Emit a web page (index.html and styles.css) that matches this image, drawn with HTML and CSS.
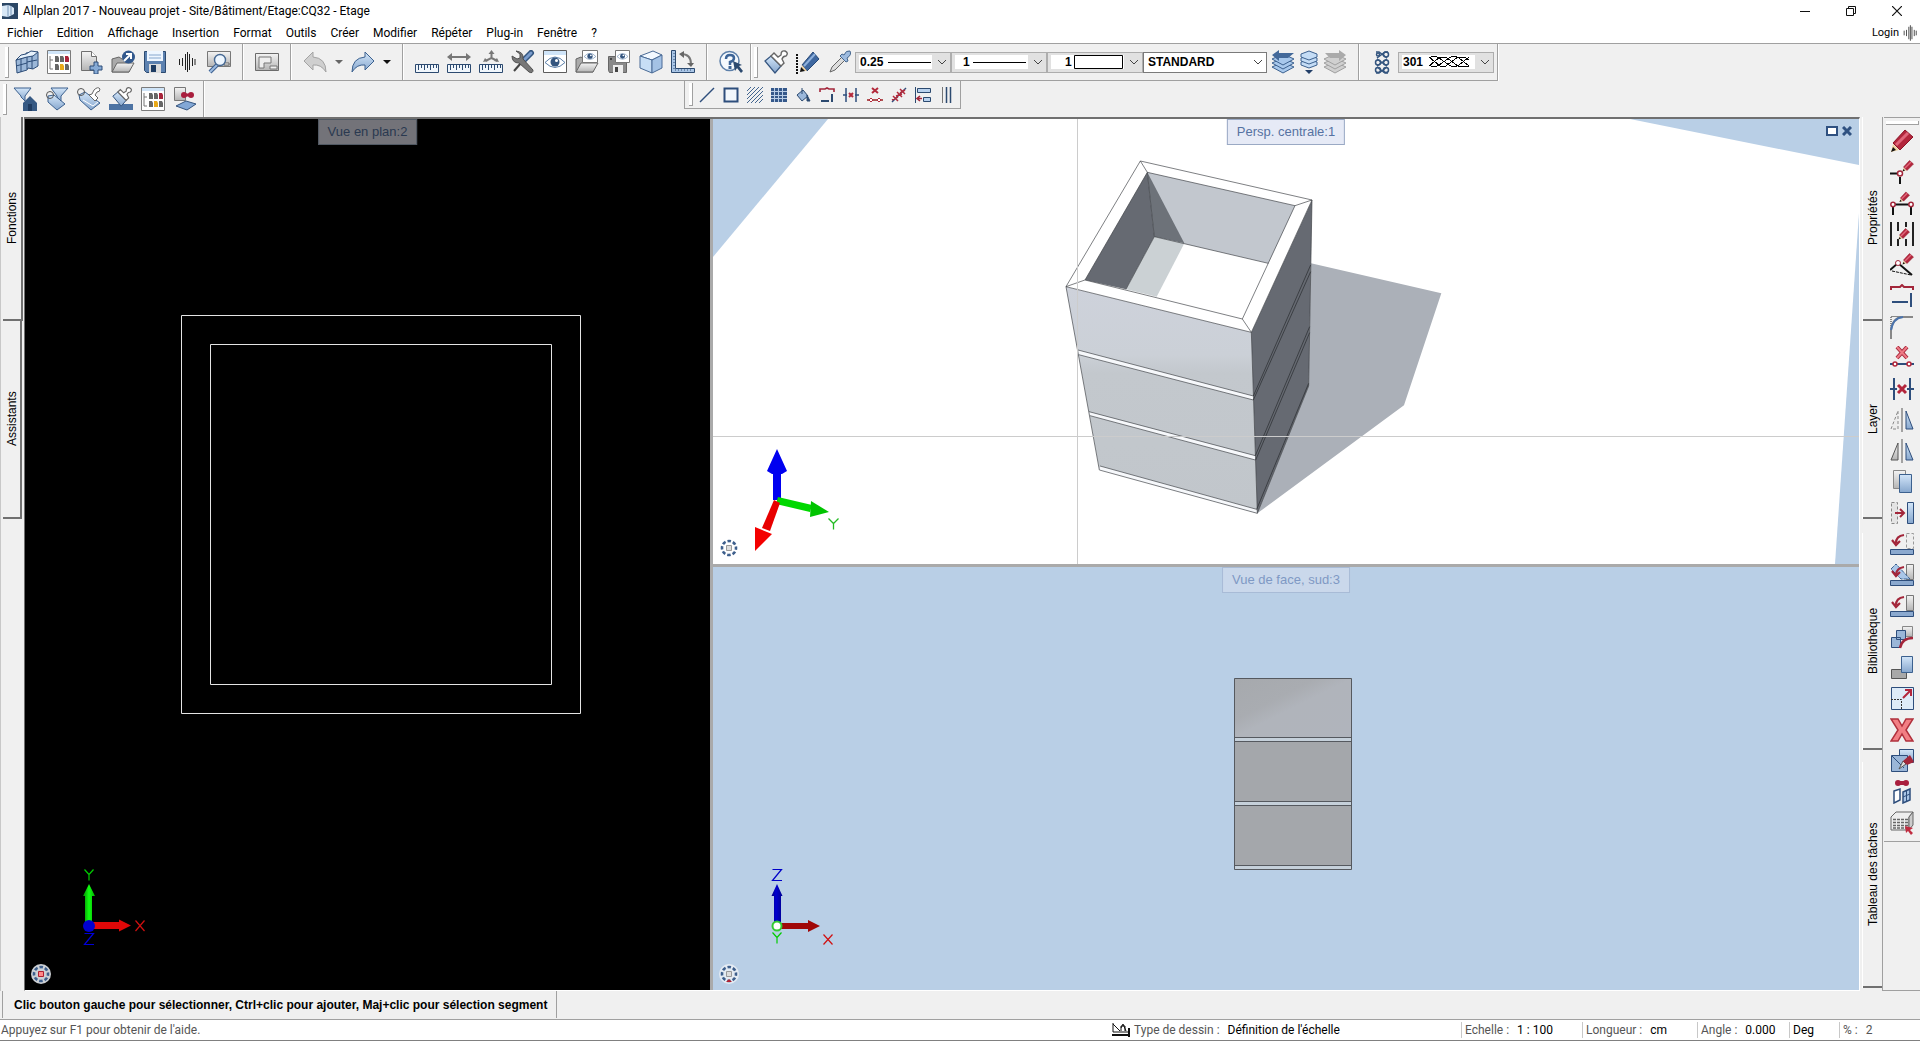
FILE: index.html
```html
<!DOCTYPE html>
<html lang="fr">
<head>
<meta charset="utf-8">
<title>Allplan 2017 - Nouveau projet</title>
<link rel="stylesheet" href="styles.css">
</head>
<body>
<svg class="defs" width="0" height="0" aria-hidden="true">
  <defs>
    <linearGradient id="blue" x1="0" y1="0" x2="0" y2="1"><stop offset="0" stop-color="#d3e6f9"/><stop offset="1" stop-color="#86a6cd"/></linearGradient>
    <linearGradient id="grey" x1="0" y1="0" x2="0" y2="1"><stop offset="0" stop-color="#f4f4f4"/><stop offset="1" stop-color="#b4b4b4"/></linearGradient>
    <linearGradient id="face" x1="0" y1="0" x2="0" y2="1"><stop offset="0" stop-color="#ced2db"/><stop offset=".3" stop-color="#cbd0d7"/><stop offset=".38" stop-color="#c3c8cd"/><stop offset="1" stop-color="#c1c6cb"/></linearGradient>
    <linearGradient id="south" x1="0" y1="0" x2="1" y2="1"><stop offset="0" stop-color="#a6a9ad"/><stop offset=".35" stop-color="#a9acb1"/><stop offset=".5" stop-color="#b0b4bb"/><stop offset="1" stop-color="#b0b4bc"/></linearGradient>
    <linearGradient id="upGreen"><stop offset="0" stop-color="#008a00"/><stop offset=".5" stop-color="#1f1"/><stop offset="1" stop-color="#00b000"/></linearGradient>
    <linearGradient id="upBlue"><stop offset="0" stop-color="#000080"/><stop offset=".4" stop-color="#0000d0"/><stop offset="1" stop-color="#000090"/></linearGradient>
  </defs>
  <symbol id="pencil" viewBox="0 0 24 24"><path d="M1 23 3 15 9 21Z" fill="#f1d3a0"/><path d="M3 14 15 1 23 8 10 21Z" fill="#b3263c" stroke="#8c1427"/><path d="m6 16 12-12" stroke="#e0667a" stroke-width="3"/><path d="m1 23 2-5 3 3Z" fill="#111"/></symbol>
  <symbol id="dial" viewBox="0 0 20 20"><circle cx="10" cy="10" r="10"/><circle cx="10" cy="10" r="7" fill="none" stroke="#3e5f8c" stroke-width="2.600" stroke-dasharray="3.500 2" stroke-dashoffset="1.750"/></symbol>
  <symbol id="table" viewBox="0 0 24 24"><path d="M.5.500h23v23H.5z" fill="#fff" stroke="#7b7b7b"/><path d="M1 1h22v3H1z" fill="#cfe4f8"/><path d="M3 6v13h3M3 10h3" fill="none" stroke="#777"/><path d="M8 6h3l1 2v4H8zM13 6h3l1 2v4h-4zM8 14h3l1 2v4H8z" fill="#666"/><path d="M18 6h3l1 2v4h-4z" fill="#a8243b"/><path d="M13 14h3l1 2v4h-4z" fill="#e8a818"/><path d="M18 14h3l1 2v4h-4z" fill="#666"/></symbol>
  <symbol id="bars" viewBox="0 0 18 20"><path d="M1.500 7v6M4.500 6v8M7.500 2v16M9.500 0v20M11.500 2v16M14.500 6v8M17 7v6" stroke="#222"/></symbol>
  <symbol id="eye" viewBox="0 0 20 12"><path d="M0 6Q10-5 20 6 10 16 0 6Z" fill="#fff" stroke="#5c7fa9"/><circle cx="10" cy="5.500" r="4.500" fill="#34557f"/><circle cx="11.500" cy="4" r="1.500" fill="#fff"/></symbol>
  <symbol id="ruler" viewBox="0 0 24 9"><path d="M.5.500h23v8H.5z" fill="#f0f6fc" stroke="#2c4a70"/><path d="M3.500 1v5M6.500 1v3M9.500 1v5M12.500 1v3M15.500 1v5M18.500 1v3M21.500 1v3" stroke="#2c4a70"/></symbol>
  <symbol id="brush" viewBox="0 0 24 24"><path d="m1 11 6-5 10 10-6 7Z" fill="url(#blue)" stroke="#35557f" stroke-width="1.200"/><path d="m7 6 3-3 4 4 3-2q0-5 4-4 4 2 1 5-3 0-4 3l2 4-3 3Z" fill="#fff" stroke="#666" stroke-width="1.400"/></symbol>
  <symbol id="layers" viewBox="0 0 24 24"><path d="m1 17 11-5 11 5-11 6Z"/><path d="m1 13 11-5 11 5-11 6Z"/><path d="m1 9 11-5 11 5-11 6Z"/></symbol>
</svg>

<header class="head">
  <div class="title">
    <svg width="16" height="16" viewBox="0 0 16 16"><path d="M0 0h16v16H0z" fill="#2c4766"/><path d="M0 3 6 2 9 3 12 5v6l-6 3-6-1Z" fill="#d9e8f6"/><path d="M6 2v12M9 3v9" stroke="#7898bb"/></svg>
    <h1>Allplan 2017 - Nouveau projet - Site/Bâtiment/Etage:CQ32 - Etage</h1>
    <div class="window">
      <button aria-label="Réduire"><svg width="10" height="10"><path d="M0 5.500h10" stroke="#111"/></svg></button>
      <button aria-label="Restaurer"><svg width="10" height="10" fill="none" stroke="#111"><path d="M.5 2.500h7v7h-7zM2.500 2V.5h7v7H8"/></svg></button>
      <button aria-label="Fermer"><svg width="10" height="10"><path d="m0 0 10 10M10 0 0 10" stroke="#111" stroke-width="1.200"/></svg></button>
    </div>
  </div>
  <nav class="menu">
    <a href="#">Fichier</a><a href="#">Edition</a><a href="#">Affichage</a><a href="#">Insertion</a><a href="#">Format</a><a href="#">Outils</a><a href="#">Créer</a><a href="#">Modifier</a><a href="#">Répéter</a><a href="#">Plug-in</a><a href="#">Fenêtre</a><a href="#">?</a>
    <div class="login"><a href="#">Login</a><svg width="14" height="16"><use href="#bars"/></svg></div>
  </nav>
</header>

<div class="toolbars">
  <div class="row first">
    <div class="group grip start">
      <button aria-label="Projet"><svg viewBox="0 0 24 24"><path d="M1 10 11 7V3l12-1v14l-5 3-5-1-1 2-10 3Z" fill="#9bb7d8" stroke="#2d4d78"/><path d="m1 10 5-5 5-1 5-3 7 1-5 4-6 1Z" fill="#e7f2fc" stroke="#2d4d78"/><path d="M6 9v13M1 16l11-3M12 7v12M17 6v13M12 12l10-2" stroke="#2d4d78" fill="none"/></svg></button>
      <button aria-label="Calques"><svg viewBox="0 0 24 24"><use href="#table"/></svg></button>
      <button aria-label="Nouveau"><svg viewBox="0 0 24 24"><path d="M2.500 1.500h10l5 5v14h-15z" fill="url(#grey)" stroke="#6f6f6f"/><path d="M12.500 1.500v5h5" fill="#fff" stroke="#6f6f6f"/><path d="M15 12h4v4h4v4h-4v4h-4v-4h-4v-4h4z" fill="#86aad5" stroke="#2d4d78"/></svg></button>
      <button aria-label="Ouvrir"><svg viewBox="0 0 24 24"><path d="M1 22V9l7-2 3 2h7v13Z" fill="#aaa" stroke="#666"/><path d="m1 22 5-9h17l-5 9Z" fill="url(#grey)" stroke="#666"/><circle cx="17.500" cy="7" r="6.500" fill="#33598d"/><path d="m13 11 6-6m-4-1h5v5" stroke="#fff" stroke-width="2" fill="none"/></svg></button>
      <button aria-label="Enregistrer"><svg viewBox="0 0 24 24"><path d="M1.500 1.500h21v21h-19l-2-2z" fill="#5c81b0" stroke="#2c4a70"/><path d="M4 1h16v10H4z" fill="#eef6ff"/><path d="M6 5h12M6 8h12" stroke="#86a6cd"/><path d="M6 14h12v9H6z" fill="#ddd"/><path d="M8 15h5v7H8z" fill="#1e3c63"/></svg></button>
      <button aria-label="Allplan Connect"><svg viewBox="-3 -2 24 24"><use href="#bars" width="18" height="20"/></svg></button>
      <button aria-label="Aperçu"><svg viewBox="0 0 24 24"><path d="M.5 1.500h23v15H.5z" fill="url(#grey)" stroke="#777"/><path d="M17 13h5v2h-5z" fill="#fff" stroke="#666"/><path d="m3 22 7-7" stroke="#3d6090" stroke-width="4"/><path d="m3 22 7-7" stroke="#9dbbe0" stroke-width="2"/><circle cx="13" cy="10" r="5.500" fill="#edf6ff" stroke="#456893" stroke-width="1.400"/></svg></button>
    </div>
    <div class="group">
      <button aria-label="Mise en page"><svg viewBox="0 0 24 24"><path d="M.5 3.500h23v17H.5z" fill="url(#grey)" stroke="#6b6b6b"/><path d="M4 7h12v6H9v5H4zM15 16h7v3h-7z" fill="#eee" stroke="#777"/></svg></button>
    </div>
    <div class="group undo">
      <button aria-label="Annuler"><svg viewBox="0 0 24 24"><path d="M1 11 10 2v5q13 1 13 15-5-8-13-7v5Z" fill="#cfcfcf" stroke="#a3a3a3"/></svg></button>
      <button aria-label="Liste annuler" class="arrow"><svg viewBox="0 0 24 24"><path d="M8 10h8l-4 4z" fill="#666"/></svg></button>
      <button aria-label="Rétablir"><svg viewBox="0 0 24 24"><path d="m23 11-9-9v5Q1 8 1 22q5-8 13-7v5Z" fill="url(#blue)" stroke="#3c618f"/></svg></button>
      <button aria-label="Liste rétablir" class="arrow"><svg viewBox="0 0 24 24"><path d="M8 10h8l-4 4z" fill="#111"/></svg></button>
    </div>
    <div class="group">
      <button aria-label="Mesurer"><svg viewBox="0 0 24 24"><use href="#ruler" y="14" width="24" height="9"/></svg></button>
      <button aria-label="Distance"><svg viewBox="0 0 24 24"><use href="#ruler" y="14" width="24" height="9"/><path d="M3 7h18" stroke="#777" stroke-width="2"/><path d="m0 7 5-4v8zm24 0-5-4v8z" fill="#777"/></svg></button>
      <button aria-label="Coordonnées"><svg viewBox="0 0 24 24"><use href="#ruler" y="14" width="24" height="9"/><path d="M12.500 2v6l-6 3m6-3 6 3" stroke="#777" stroke-width="2" fill="none"/><path d="m12.500 0 3 4h-6zM4 12l2-4 3 3zm16 0-2-4-3 3z" fill="#777"/></svg></button>
      <button aria-label="Options"><svg viewBox="0 0 24 24"><path d="m3 21 7-8" stroke="#444" stroke-width="2"/><path d="m12 11 8-8" stroke="#32557f" stroke-width="6" stroke-linecap="round"/><path d="m12 11 8-8" stroke="#7a9ccc" stroke-width="3" stroke-linecap="round"/><path d="m5 1 4 3v4L6 9 1 6q0 7 7 7l10 9q4 2 4-2L12 9q1-7-7-8Z" fill="#777" stroke="#505050"/></svg></button>
      <button aria-label="Affichage écran"><svg viewBox="0 0 24 24"><path d="M.5.500h23v22H.5z" fill="#fff" stroke="#5c5c5c"/><path d="M1 1h22v4H1z" fill="#cfe4f8"/><use href="#eye" x="2" y="6" width="20" height="13"/></svg></button>
      <button aria-label="Ouvrir vue"><svg viewBox="0 0 24 24"><path d="M1 22V9l5-2 3 2h9v13Z" fill="#aaa" stroke="#666"/><path d="m1 22 5-9h17l-5 9Z" fill="url(#grey)" stroke="#666"/><path d="M7.500.500h15v12h-15z" fill="#fff" stroke="#777"/><use href="#eye" x="9" y="3" width="12" height="7"/></svg></button>
      <button aria-label="Enregistrer vue"><svg viewBox="0 0 24 24"><path d="M1.500 6.500h18v16h-17l-1-2z" fill="#8a8a8a" stroke="#666"/><path d="M6 15h10v8H6z" fill="#eee"/><path d="M8 17h3v5H8zM3 8h2v2H3z" fill="#444"/><path d="M8.500.500h14v12h-14z" fill="#fff" stroke="#777"/><use href="#eye" x="10" y="3" width="11" height="7"/></svg></button>
      <button aria-label="Vue 3D"><svg viewBox="0 0 24 24" stroke="#4a6b96" stroke-linejoin="round"><path d="M1 6 14 1l9 4-10 5Z" fill="#f3f9ff"/><path d="m1 6 12 4v13L1 18Z" fill="#c7def5"/><path d="M13 10 23 5v13l-10 5Z" fill="#a4c2e5"/></svg></button>
      <button aria-label="Rotation du repère"><svg viewBox="0 0 24 24"><path d="M.5.500h4v18h19v4H.5z" fill="#a9c5e6" stroke="#2c4a70"/><path d="M3 3v17h18" stroke="#2c4a70" stroke-dasharray="1 2" fill="none"/><path d="M10 4q10 0 10 10" fill="none" stroke="#777" stroke-width="2"/><path d="m8 4 5-3v7zm12 13-4-4h7z" fill="#666"/></svg></button>
    </div>
    <div class="group help">
      <button aria-label="Aide"><svg viewBox="0 0 24 24"><circle cx="10.500" cy="11" r="9.500" fill="#f5f9fd" stroke="#5c7fa9" stroke-width="1.500"/><path d="M7 9q0-4 4-4t4 3-4 4v3" fill="none" stroke="#3c6497" stroke-width="2.500"/><path d="M9.500 16h3v3h-3z" fill="#3c6497"/><path d="m14 11 9 4-3 1 4 5-2 2-4-5-2 3Z" fill="#2c4a70"/></svg></button>
    </div>
    <div class="group grip">
      <button aria-label="Reprendre"><svg viewBox="0 0 24 24"><use href="#brush"/></svg></button>
      <button aria-label="Modifier le format"><svg viewBox="0 0 24 24"><path d="M1 4v20" stroke="#111" stroke-width="2" stroke-dasharray="2 1"/><path d="m6 15 11-13 6 7-12 12Z" fill="#3f68a0" stroke="#284a78"/><path d="m8 16 11-12" stroke="#8fb1dc" stroke-width="2"/><path d="m5 21 1-6 5 6Z" fill="#efd3a3"/><path d="m4 22 1-5 4 4Z" fill="#111"/></svg></button>
      <button aria-label="Pipette"><svg viewBox="0 0 24 24"><path d="m2 22 2-5L14 7l3 3L7 20Z" fill="#ddd" stroke="#666"/><path d="m12 6 2-2 2 1q2-5 6-4 2 4-3 7l1 3-2 1Z" fill="#9dbbe0" stroke="#45678f"/></svg></button>
      <div class="pick">
        <select aria-label="Épaisseur de trait" class="sample"><option>0.25</option></select>
        <svg width="96" height="21"><path d="M33 10.500h43" stroke="#000"/><path d="m83 8 4 4 4-4" fill="none" stroke="#444"/></svg>
      </div>
      <div class="pick">
        <select aria-label="Type de trait" class="sample short"><option>1</option></select>
        <svg width="96" height="21"><path d="M22 10.500h53" stroke="#000"/><path d="m83 8 4 4 4-4" fill="none" stroke="#444"/></svg>
      </div>
      <div class="pick">
        <select aria-label="Couleur de trait" class="sample mid"><option>1</option></select>
        <svg width="96" height="21"><path d="M27.500 3.500h48v13h-48z" fill="#fff" stroke="#000"/><path d="m83 8 4 4 4-4" fill="none" stroke="#444"/></svg>
      </div>
      <div class="pick layer">
        <select aria-label="Layer"><option>STANDARD</option></select>
        <svg width="124" height="21"><path d="m111 8 4 4 4-4" fill="none" stroke="#444"/></svg>
      </div>
      <div class="stack">
        <button aria-label="Layer précédent"><svg viewBox="0 0 24 24"><use href="#layers" fill="#a8c8ec" stroke="#3c618f"/><path d="M1 5 8 0v3h15l-6 5H8v3Z" fill="#43699a"/></svg></button>
        <button aria-label="Choisir layer"><svg viewBox="0 0 24 24"><g fill="#c4dcf5" stroke="#3c618f"><path d="m4 12 8-2 8 2v3l-8 3-8-3Z"/><path d="m4 8 8-2 8 2v3l-8 3-8-3Z"/><path d="m4 4 8-3 8 3v3l-8 3-8-3Z"/></g><path d="M8 20h8l-4 4z" fill="#223f68"/></svg></button>
        <button aria-label="Layer suivant"><svg viewBox="0 0 24 24"><use href="#layers" fill="#d0d0d0" stroke="#a0a0a0"/><path d="m23 5-7-5v3H2l5 5h9v3Z" fill="#aaa"/></svg></button>
      </div>
    </div>
    <div class="group last">
      <button aria-label="Motif"><svg viewBox="0 0 24 24" fill="none" stroke="#34557f" stroke-width="1.500"><path d="M5 2h3l8 6M17 2h-3L6 8M6 9l10 7M16 9 6 16M6 17l8 6h3M16 17l-8 6H5"/><circle cx="15" cy="4.500" r="2.500"/><circle cx="7" cy="4.500" r="1.500"/><circle cx="15" cy="12.500" r="2.500"/><circle cx="7" cy="12.500" r="2.500"/><circle cx="15" cy="20" r="2.500"/><circle cx="7" cy="20" r="2.500"/></svg></button>
      <div class="pick">
        <select aria-label="Motif de ligne" class="sample"><option>301</option></select>
        <svg width="96" height="21"><path d="M31 6q5-3 10 0l10 7q5 3 10 0l10-8M31 13q5 3 10 0l10-7q5-3 10 0l10 8M31 5l11 9h6l12-9h6l5 3M31 14l11-9h6l12 9h11" fill="none" stroke="#000" shape-rendering="crispEdges"/><path d="m83 8 4 4 4-4" fill="none" stroke="#444"/></svg>
      </div>
    </div>
  </div>
  <div class="row second">
    <div class="group grip">
      <button aria-label="Filtre bâtiment"><svg viewBox="0 0 24 24"><path d="M1 1h17l-6 8v5l-4-4V9Z" fill="url(#blue)" stroke="#3c618f"/><path d="m10 16 7-7 7 7v8H10Z" fill="#365983"/><path d="M15 17h4v7h-4z" fill="#1f3b60"/></svg></button>
      <button aria-label="Filtre attributs"><svg viewBox="0 0 24 24"><path d="m3 9 6-1 11 9-8 6-9-8Z" fill="url(#blue)" stroke="#3c618f"/><path d="M6 1h17l-7 8v5l-4-4V9Z" fill="url(#blue)" stroke="#3c618f"/><circle cx="5" cy="8" r="3.500" fill="none" stroke="#555"/></svg></button>
      <button aria-label="Étiquette pinceau"><svg viewBox="0 0 24 24"><path d="m2 8 6-3 15 11-9 7L3 13Z" fill="url(#blue)" stroke="#3c618f"/><path d="m6 13 10 6 5-4" fill="none" stroke="#fff"/><path d="m12 8 3-1 2-4q4-4 6-1 0 3-3 3l-2 3 3 3-3 3Z" fill="#fff" stroke="#666"/><circle cx="4" cy="5" r="3.500" fill="none" stroke="#555"/></svg></button>
      <button aria-label="Reprendre surface"><svg viewBox="0 0 24 24"><path d="M0 17h24v6H0z" fill="#4d73a3"/><use href="#brush" x="3" width="20" height="20"/></svg></button>
      <button aria-label="Légende"><svg viewBox="0 0 24 24"><use href="#table"/></svg></button>
      <button aria-label="Rechercher objet"><svg viewBox="0 0 24 24"><path d="M1.500.500h11v13h-11z" fill="url(#grey)" stroke="#777"/><path d="m3 19 10-5 10 3-9 6Z" fill="#83a8d6" stroke="#35557f"/><path d="M12 8h6" stroke="#a91e3d" stroke-width="3"/><circle cx="11" cy="8" r="3" fill="#a91e3d"/><circle cx="18" cy="8" r="3" fill="#a91e3d"/></svg></button>
    </div>
    <div class="docked grip">
      <button aria-label="Ligne"><svg viewBox="0 0 16 16"><path d="M1 15 15 1" stroke="#2e4e7c" stroke-width="1.500"/></svg></button>
      <button aria-label="Rectangle"><svg viewBox="0 0 16 16"><path d="M1.500 1.500h13v13h-13z" fill="#f2f7fc" stroke="#2e4e7c" stroke-width="2"/></svg></button>
      <button aria-label="Hachurage"><svg viewBox="0 0 16 16"><path d="M0 4l4-4M0 8l8-8M0 12 12 0M0 16 16 0M4 16 16 4M8 16l8-8M12 16l4-4" stroke="#42658f"/></svg></button>
      <button aria-label="Motif de surface"><svg viewBox="0 0 16 16"><path d="M0 1h16v14H0z" fill="#35588a"/><path d="M3.500 1v14M7.500 1v14M11.500 1v14M0 4.500h16M0 8.500h16M0 11.500h16" stroke="#b9cde6"/></svg></button>
      <button aria-label="Remplissage"><svg viewBox="0 0 16 16"><path d="m2 8 6-5 5 6-6 5Z" fill="#9bb8db" stroke="#2c4a70"/><path d="M7 7V1M12 8l3 6h-3z" stroke="#2c4a70" fill="#2c4a70"/></svg></button>
      <button aria-label="Ajuster"><svg viewBox="0 0 16 16"><path d="M1 5V2h5l2-1 2 1h5v3" fill="none" stroke="#a3263a" stroke-width="1.600"/><path d="M2 14h8M13 7v8" stroke="#2c4a70" stroke-width="2"/></svg></button>
      <button aria-label="Supprimer entre"><svg viewBox="0 0 16 16"><path d="M3 1v14M13 1v14M0 8h4M12 8h4" stroke="#2e4e7c" stroke-width="1.500"/><path d="m6 6 4 4M10 6l-4 4" stroke="#b32a3c" stroke-width="2"/></svg></button>
      <button aria-label="Supprimer segment"><svg viewBox="0 0 16 16"><path d="m5 1 6 5M11 1 5 6" stroke="#b32a3c" stroke-width="2"/><path d="M0 13h16" stroke="#922" stroke-width="1.500"/><path d="m2 13 2-2 2 2-2 2zM10 13l2-2 2 2-2 2z" fill="#fff" stroke="#b32a3c"/></svg></button>
      <button aria-label="Supprimer points"><svg viewBox="0 0 16 16"><path d="M1 15 15 1" stroke="#2e4e7c" stroke-width="1.500"/><path d="m2 9 5 5M6 5l5 5M9 2l5 5M1 13l6-3M5 9l6-2M9 6l5-3" stroke="#b32a3c" stroke-width="1.500"/></svg></button>
      <button aria-label="Aligner"><svg viewBox="0 0 16 16"><path d="M.5 0v16" stroke="#2c4a70"/><path d="M2.500 1.500h13v4h-13zM8.500 10.500h7v4h-7z" fill="#b9d2ee" stroke="#2c4a70"/><path d="M2 11.500h5M5 9l-3 2.500L5 14" stroke="#a3263a" stroke-width="1.600" fill="none"/></svg></button>
      <button aria-label="Parallèles"><svg viewBox="0 0 16 16"><path d="M3.500 0v16" stroke="#777"/><path d="M7.500 0v16M11.500 0v16" stroke="#2c4a70" stroke-width="1.500"/></svg></button>
    </div>
  </div>
</div>

<main class="work">
  <div class="tabs left">
    <button class="t1">Fonctions</button>
    <button class="t2">Assistants</button>
  </div>

  <div class="views">
    <section class="view plan">
      <svg class="scene" viewBox="25 119 685 871">
        <g fill="none" stroke="#e4e4e4"><path d="M181.500 315.500h399v398h-399z"/><path d="M210.500 344.500h341v340h-341z"/></g>
        <path d="M85 896h7v30h-7zM83 896l6-12 6 12z" fill="url(#upGreen)"/>
        <path d="M92 922h27v7H92zM119 919.500l12 6-12 6z" fill="#e00808"/>
        <circle cx="89" cy="926" r="6" fill="#0000d0"/>
        <g fill="none" stroke-width="1.200"><path d="m84.500 869.500 4.500 5 4.500-5M89 874.500v6" stroke="#0c0"/><path d="m135.500 920.500 9 10.500M144.500 920.500l-9 10.500" stroke="#d01010"/><path d="M84.500 933.500h9l-9 11h9.500" stroke="#0000d8"/></g>
        <use href="#dial" x="31" y="964" width="20" height="20" fill="#ccd0d5"/>
        <path d="M38.500 971.500h5v5h-5z" fill="#f88" stroke="#b02030"/>
      </svg>
      <span class="label">Vue en plan:2</span>
    </section>

    <section class="view persp">
      <svg class="scene" viewBox="713 119 1146 445">
        <path d="M828 119H1630L1859 165V213L1835 564H713V257Z" fill="#fff"/>
        <g transform="translate(1050 150) scale(.333333)" stroke-linejoin="round">
          <path d="M783 340 1174 430 1062 766 622 1090 776 708Z" fill="#abb0b8"/>
          <path d="M48 410 604 547 622 1090 148 958Z" fill="url(#face)"/>
          <path d="M604 547 786 150 776 708 622 1090Z" fill="#666a72"/>
          <path d="M271 33 786 150 604 547 48 410Z" fill="#fff"/>
          <path d="m292 67 443 100-80 173-342-80Z" fill="#c2c7ce"/>
          <path d="M292 67 105 390l123 28 85-158Z" fill="#666a72"/>
          <path d="m292 67 21 193 90 20Z" fill="#6d7279"/>
          <path d="m313 260 90 20-83 160-92-22Z" fill="#cbd1d4"/>
          <path d="m84 600 526 138v12L86 614ZM117 785l499 132v13L120 797ZM150 948l470 130 2 12L148 960Z" fill="#f6f8fb"/>
          <g fill="none" stroke="#3c3f44" stroke-width="2">
            <path d="M271 33 786 150 604 547 48 410ZM292 67 735 167 577 507 105 390ZM271 33l21 34M786 150l-51 17M604 547l-27-40M48 410l57-20M48 410l100 550 474 130-18-543M786 150l-10 558-154 382"/>
            <path d="m292 67 21 193 342 80M313 260l-85 158M84 600l526 138M86 614l524 136M117 785l499 132M120 797l496 133M150 948l470 130"/>
            <path d="m610 738 172-393M610 750l172-385M616 917l163-387M617 930l162-382M620 1078l156-378" stroke="#26282c"/>
          </g>
        </g>
        <path d="M1077.500 119v445M713 436.500h1146" stroke="#ccc"/>
        <path d="M773 471h8v29h-8zM767 471l10-22 10 22-5 3h-10z" fill="#0000f0"/>
        <path d="m778 497 34 8-2 7-34-8Z" fill="#00d800"/><path d="m811 501 18 11-19 5Z" fill="#00c400"/>
        <path d="m774 500 6 3-10 28-8-3Z" fill="#e80000"/><path d="m755 527 17 7-17 17Z" fill="#f40000"/>
        <path d="m828.500 518.500 5 5 5-5M833.500 523.500v6" fill="none" stroke="#2b2" stroke-width="1.300"/>
        <use href="#dial" x="719" y="538" width="20" height="20" fill="#fff"/>
        <path d="M726.500 545.500h5v5h-5z" fill="#ddd" stroke="#999"/>
      </svg>
      <span class="label">Persp. centrale:1</span>
      <div class="corner">
        <button aria-label="Agrandir la vue"><svg width="12" height="10"><path d="M1 1h10v8H1z" fill="#fff" stroke="#2f5181" stroke-width="2"/></svg></button>
        <button aria-label="Fermer la vue"><svg width="10" height="10"><path d="m1 1 8 8M9 1 1 9" stroke="#2f5181" stroke-width="3"/></svg></button>
      </div>
    </section>

    <section class="view face">
      <svg class="scene" viewBox="713 567 1146 423">
        <path d="M1234.500 678.500h117v191h-117z" fill="#a4a7ab"/>
        <path d="M1234.500 678.500h117v59h-117z" fill="url(#south)"/>
        <path d="M1234.500 738h117v4h-117zM1234.500 802h117v4h-117zM1234.500 866h117v4h-117z" fill="#c5d0da"/>
        <path d="M1234.500 678.500h117v191h-117zM1234.500 737.500h117M1234.500 741.500h117M1234.500 801.500h117M1234.500 805.500h117M1234.500 865.500h117" fill="none" stroke="#55595f"/>
        <path d="M774 896h7v26h-7zM771.500 896l5.500-12 5.500 12z" fill="url(#upBlue)"/>
        <path d="M781 923h27v6h-27zM808 920l12 6-12 6z" fill="#a00808"/>
        <circle cx="777" cy="926" r="4.500" fill="#fff" stroke="#3c3" stroke-width="2"/>
        <g fill="none" stroke-width="1.200"><path d="M772.500 869.500h9l-9 11h9.500" stroke="#0000c8"/><path d="m772.500 932.500 4.500 5 4.500-5M777 937.500v6" stroke="#0c0"/><path d="m823.500 934.500 9 10M832.500 934.500l-9 10" stroke="#d01010"/></g>
        <use href="#dial" x="719" y="964" width="20" height="20" fill="#e4ebf3"/>
        <path d="M726.500 971.500h5v5h-5z" fill="#ddd" stroke="#999"/><path d="m726 982 3-3 3 3z" fill="#b02030"/>
      </svg>
      <span class="label">Vue de face, sud:3</span>
    </section>
  </div>

  <div class="tabs right">
    <button class="t1">Propriétés</button>
    <button class="t2">Layer</button>
    <button class="t3">Bibliothèque</button>
    <button class="t4">Tableau des tâches</button>
  </div>

  <div class="side">
    <div class="tools">
      <button aria-label="Effacer"><svg viewBox="0 0 24 24"><use href="#pencil"/></svg></button>
      <button aria-label="Effacer au point"><svg viewBox="0 0 24 24"><path d="M0 13.500h8M10 17v7" stroke="#111" stroke-width="2"/><use href="#pencil" x="12" width="12" height="12"/><circle cx="10" cy="13.500" r="2.500" fill="#fff" stroke="#a3263a" stroke-width="1.500"/></svg></button>
      <button aria-label="Effacer entre points"><svg viewBox="0 0 24 24"><path d="M3 13.500h18M3 16v8M21 16v8" stroke="#111" stroke-width="2"/><use href="#pencil" x="9" width="11" height="12"/><g fill="#fff" stroke="#a3263a" stroke-width="1.500"><circle cx="3" cy="13.500" r="2.200"/><circle cx="21" cy="13.500" r="2.200"/></g></svg></button>
      <button aria-label="Effacer parallèles"><svg viewBox="0 0 24 24"><path d="M1 0v24M23 0v24M8 0v9M8 17v7M16 0v5M16 17v7" stroke="#222" stroke-width="2"/><use href="#pencil" x="8" y="6" width="12" height="12"/></svg></button>
      <button aria-label="Supprimer sommet"><svg viewBox="0 0 24 24"><path d="m0 17 8-7 14 12" fill="none" stroke="#111" stroke-width="2"/><path d="m2 18 19 4" stroke="#111" stroke-dasharray="3 1"/><use href="#pencil" x="12" width="12" height="12"/><circle cx="8" cy="10" r="2.500" fill="#fff" stroke="#a3263a"/></svg></button>
      <button aria-label="Prolonger"><svg viewBox="0 0 24 24"><path d="M1 6V3h9l2-2 2 2h9v3" fill="none" stroke="#a3263a" stroke-width="2"/><path d="M2 18h16M21 9v14" stroke="#2e4e7c" stroke-width="2"/></svg></button>
      <button aria-label="Raccord arrondi"><svg viewBox="0 0 24 24"><path d="M1 11V1.500h10" fill="none" stroke="#222" stroke-dasharray="1 1"/><path d="M1 24v-9Q3 2 13 2h10" fill="none" stroke="#888" stroke-width="2"/><path d="M1 15Q3 3 13 2" fill="none" stroke="#4a73ad" stroke-width="2"/></svg></button>
      <button aria-label="Supprimer élément"><svg viewBox="0 0 24 24"><path d="m7 1 10 11M17 1 7 12" stroke="#a8293c" stroke-width="4"/><path d="m7 1 10 11M17 1 7 12" stroke="#ee7a86" stroke-width="2"/><path d="M0 18h24" stroke="#2e4e7c" stroke-width="2"/><g fill="#fff" stroke="#b3263a" stroke-width="1.500"><circle cx="5" cy="18" r="2"/><circle cx="19" cy="18" r="2"/></g></svg></button>
      <button aria-label="Supprimer entre intersections"><svg viewBox="0 0 24 24"><path d="M4 1v22M20 1v22M0 12h7M17 12h7" stroke="#2e4e7c" stroke-width="2"/><path d="m8 8 8 8M16 8l-8 8" stroke="#b3263c" stroke-width="3"/></svg></button>
      <button aria-label="Symétrie"><svg viewBox="0 0 24 24"><path d="M8 3v18H1Z" fill="#ececec" stroke="#888" stroke-dasharray="3 2"/><path d="M12 0v24" stroke="#555"/><path d="M16 3v18h7Z" fill="url(#blue)" stroke="#2e4e7c"/></svg></button>
      <button aria-label="Copie miroir"><svg viewBox="0 0 24 24"><path d="M8 4v17H1Z" fill="url(#grey)" stroke="#555"/><path d="M12 0v24" stroke="#555"/><path d="M16 4v17h7Z" fill="url(#blue)" stroke="#2e4e7c"/></svg></button>
      <button aria-label="Copier"><svg viewBox="0 0 24 24"><path d="M3.500.500h12v18h-12z" fill="url(#grey)" stroke="#888"/><path d="M9.500 4.500h12v18h-12z" fill="url(#blue)" stroke="#3c618f"/></svg></button>
      <button aria-label="Déplacer"><svg viewBox="0 0 24 24"><path d="M1.500 1.500h6v21h-6z" fill="#e4e4e4" stroke="#888" stroke-dasharray="3 2"/><path d="M17.500 1.500h6v21h-6z" fill="url(#blue)" stroke="#2e4e7c"/><path d="M5 12h9m-4-4 4 4-4 4" fill="none" stroke="#a3263a" stroke-width="2"/></svg></button>
      <button aria-label="Rotation"><svg viewBox="0 0 24 24"><path d="M16.500 1.500h7v15h-7z" fill="#eee" stroke="#999" stroke-dasharray="3 2"/><path d="M.5 17.500h23v5H.5z" fill="#8ba9cf" stroke="#2e4e7c"/><path d="M14 3Q6 4 6 11M2 8l4 5 4-4" fill="none" stroke="#a3263a" stroke-width="2.200"/></svg></button>
      <button aria-label="Rotation avec copies"><svg viewBox="0 0 24 24"><path d="M16.500 1.500h7v15h-7z" fill="url(#grey)" stroke="#777"/><path d="m1 6 5-5 14 15H11Z" fill="#aac7e9" stroke="#3c618f" stroke-dasharray="4 1"/><path d="M.5 17.500h23v5H.5z" fill="#8ba9cf" stroke="#2e4e7c"/><path d="M14 4Q7 5 6 11M2 8l4 5 4-4" fill="none" stroke="#a3263a" stroke-width="2.200"/></svg></button>
      <button aria-label="Copie par rotation"><svg viewBox="0 0 24 24"><path d="M16.500 1.500h7v15h-7z" fill="url(#grey)" stroke="#777"/><path d="M.5 17.500h23v5H.5z" fill="#8ba9cf" stroke="#2e4e7c"/><path d="M14 3Q6 4 6 11M2 8l4 5 4-4" fill="none" stroke="#a3263a" stroke-width="2.200"/></svg></button>
      <button aria-label="Copier le long"><svg viewBox="0 0 24 24"><path d="M12.500 1.500h10v10h-10z" fill="url(#grey)" stroke="#888"/><path d="M6.500 5.500h9v9h-9zM1.500 12.500h9v10h-9z" fill="#9ab6d8" stroke="#2e4e7c"/><path d="M10 23q2-10 13-10" fill="none" stroke="#a3263a" stroke-width="2.500"/></svg></button>
      <button aria-label="Déplacer et tourner"><svg viewBox="0 0 24 24"><path d="M1.500 13.500h15v9h-15z" fill="#a8a8a8" stroke="#555"/><path d="M11.500.500h11v16h-11z" fill="url(#blue)" stroke="#3c618f"/></svg></button>
      <button aria-label="Étirer"><svg viewBox="0 0 24 24"><path d="M1.500.500h22v22h-22z" fill="#deebf8" stroke="#2e4e7c"/><path d="M1 12.500h10.500V23" fill="none" stroke="#333" stroke-dasharray="2 1"/><path d="m13 11 7-7m-5-1h6v6" fill="none" stroke="#b3263c" stroke-width="2"/></svg></button>
      <button aria-label="Supprimer"><svg viewBox="0 0 24 24"><path d="M1 1h7l4 7 4-7h7l-7 11 7 11h-7l-4-7-4 7H1l7-11Z" fill="#f27f84" stroke="#b0303c" stroke-width="1.500"/></svg></button>
      <button aria-label="Découper"><svg viewBox="0 0 24 24"><path d="M9.500 .5h14v13h-14z" fill="url(#blue)" stroke="#2e4e7c"/><path d="M1.500 6.500h16v16h-16z" fill="#9ab6d8" stroke="#2e4e7c"/><path d="m2 7 12 12" stroke="#2e4e7c"/><path d="m9 20 4-8 3 3Z" fill="#ddd" stroke="#555"/><path d="m13 12 7-6 4 7-7 3Z" fill="#a3263a"/></svg></button>
      <button aria-label="Rechercher ouverture"><svg viewBox="0 0 24 24"><path d="M9 3h7" stroke="#a91e3d" stroke-width="4"/><circle cx="8" cy="3" r="3" fill="#a91e3d"/><circle cx="16" cy="3" r="3" fill="#a91e3d"/><path d="m4 11 6-2v11l-6 3Z" fill="#fff" stroke="#2e4e7c" stroke-width="1.500"/><path d="m13 12 7-3v11l-7 3Z" fill="#a9c5e6" stroke="#2e4e7c" stroke-width="1.500"/><path d="M16.500 10v12M13 17l7-3" stroke="#2e4e7c"/></svg></button>
      <button aria-label="Mur"><svg viewBox="0 0 24 24"><path d="m1 6 5-5h17l-4 5v13H1Z" fill="#eee" stroke="#666"/><path d="m19 6 4-5v13l-4 5Z" fill="#ccc" stroke="#666"/><path d="M3 8.500h15M3 11.500h15M3 14.500h15M3 17h15" stroke="#666" stroke-width="1.500" stroke-dasharray="3 1"/><path d="m15 15 8 2-3 2 3 3-2 2-3-4-2 2Z" fill="#c02c40"/></svg></button>
    </div>
  </div>
</main>

<div class="prompt"><p>Clic bouton gauche pour sélectionner, Ctrl+clic pour ajouter, Maj+clic pour sélection segment</p></div>

<footer class="status">
  <span class="hint">Appuyez sur F1 pour obtenir de l'aide.</span>
  <div class="cell type"><svg width="18" height="14" viewBox="0 0 18 14"><path d="M1 0v9h15M1 1l7 7M9 8V3h4v5M9 5l2-4 3 7" fill="none" stroke="#111"/><path d="M0 12h17M17 5v9" stroke="#111" stroke-width="2"/></svg><span>Type de dessin :</span><b>Définition de l'échelle</b></div>
  <div class="cell scale"><span>Echelle :</span><b>1 : 100</b></div>
  <div class="cell length"><span>Longueur :</span><b>cm</b></div>
  <div class="cell angle"><span>Angle :</span><b>0.000</b></div>
  <div class="cell unit"><b>Deg</b></div>
  <div class="cell percent"><span>% :</span><span>2</span></div>
</footer>
</body>
</html>
```
FILE: styles.css
```css
* { box-sizing: border-box; }

body {
  margin: 0;
  min-height: 100vh;
  display: flex;
  flex-direction: column;
  background: #f0f0f0;
  color: #000;
  font: 12px/16px Roboto, "Noto Sans", sans-serif;
}

.defs { position: absolute; }
svg { display: block; flex: none; }

button {
  margin: 0;
  padding: 0;
  border: 0;
  background: none;
  font: inherit;
  color: inherit;
}

a { color: inherit; text-decoration: none; }

/* Title and menu */
.head { background: #fff; border-bottom: 1px solid #a0a0a0; }

.title { display: flex; align-items: center; height: 22px; padding-left: 2px; }
.title h1 { margin: 0 0 0 5px; font-size: 12px; font-weight: 400; }
.window { display: flex; margin-left: auto; }
.window button { width: 46px; height: 20px; display: grid; place-items: center; }

.menu { display: flex; align-items: center; gap: 14px; height: 21px; padding: 0 3px 0 7px; }
.login { display: flex; align-items: center; gap: 4px; margin-left: auto; font-size: 11px; }

/* Toolbars */
.row { display: flex; align-items: stretch; }
.first { height: 37px; }
.second { height: 36px; }

.group {
  display: flex;
  align-items: center;
  gap: 8px;
  padding: 0 11px 0 12px;
  border-right: 1px solid #a0a0a0;
  box-shadow: 1px 0 #fff;
}
.first .group { border-bottom: 1px solid #a0a0a0; }
.group button, .group button svg { width: 24px; height: 24px; }
.group.grip { padding-left: 3px; }
.group.start { padding-left: 5px; }
.group.undo { gap: 0; padding-right: 3px; }
.group.help { padding-right: 7px; }
.group.last { padding: 0 3px 0 12px; }

.grip::before {
  content: "";
  flex: none;
  width: 3px;
  height: 30px;
  margin-right: -2px;
  border: 1px solid #a0a0a0;
  border-width: 0 1px 1px 0;
  background: #fff;
}
.second .group { padding-right: 6px; }

.pick { position: relative; }
.pick svg { position: absolute; inset: 0; pointer-events: none; }
.pick select {
  display: block;
  appearance: none;
  width: 96px;
  height: 21px;
  padding: 0 0 0 4px;
  border: 1px solid #adadad;
  border-radius: 0;
  background: #e1e1e1;
  color: #000;
  font: bold 12px/16px "Liberation Sans", sans-serif;
}
.pick .sample { background: linear-gradient(#fff, #fff) 3px 2px / 73px 14px no-repeat #e1e1e1; }
.pick .short { padding-left: 11px; }
.pick .mid { padding-left: 17px; }
.pick + .pick { margin-left: -8px; }
.pick.layer select { width: 124px; border-color: #7a7a7a; background: #fff; }
.group .pick:first-of-type { margin-left: -5px; }
.stack { display: flex; gap: 2px; margin-left: -4px; }

.docked {
  display: flex;
  align-items: center;
  gap: 8px;
  height: 28px;
  margin-left: 25%;
  padding: 0 5px 0 4px;
  border: 1px solid #a0a0a0;
  border-top: 0;
}
.docked::before { height: 22px; }
.docked button, .docked svg { width: 16px; height: 16px; }

/* Workspace */
.work { flex: 1; display: grid; grid-template-columns: 24px minmax(0, 1fr) 23px 37px; }

.tabs { display: grid; }
.tabs button {
  writing-mode: vertical-rl;
  transform: rotate(180deg);
  display: grid;
  place-items: center;
  font: 12px/16px "Liberation Sans", sans-serif;
  border: 0 solid #707070;
}
.left { grid-template-rows: 204fr 198fr 472fr; padding-left: 2px; border-left: 1px solid #c8c8c8; }
.left button { border-width: 2px 0 0 2px; margin-right: 1px; }
.left .t2 { margin-right: 2px; }

.right { grid-template-rows: 204fr 198fr 14fr 217fr 12fr 226fr 3fr; padding-left: 3px; border-right: 1px solid #a0a0a0; }
.right button { border-width: 2px 0 0; box-shadow: 1px 0 #fff; }
.right .t3 { grid-row: 4; }
.right .t4 { grid-row: 6; }

.views {
  display: grid;
  grid-template: 445fr 423fr / 685fr 1146fr;
  gap: 3px;
  background: #aaa;
  border: 1px solid #fff;
  border-top: 2px solid #707070;
  border-left-color: #707070;
}
.view { position: relative; min-width: 0; min-height: 0; background: #b9cfe6; overflow: hidden; }
.plan { grid-row: 1 / 3; background: #000; }
.scene { position: absolute; inset: 0; width: 100%; height: 100%; }

.label {
  position: absolute;
  top: 0;
  left: 50%;
  transform: translateX(-50%);
  padding: 3px 9px;
  border: 1px solid #9aa9c4;
  background: #e6eaf6;
  color: #5672a2;
  font: 13px/18px "Liberation Sans", sans-serif;
  white-space: nowrap;
}
.plan .label { background: #737379; border-color: #515963; color: #2a3950; }
.face .label { background: #cad8eb; border-color: #a8bbd6; color: #7f99c4; }

.corner { position: absolute; top: 7px; right: 7px; display: flex; gap: 4px; }

/* Vertical tool strip */
.side { padding-left: 1px; border-bottom: 1px solid #a0a0a0; }
.tools {
  display: flex;
  flex-direction: column;
  align-items: center;
  gap: 7px;
  padding-bottom: 6px;
  border-top: 1px solid #a0a0a0;
  border-bottom: 1px solid #a0a0a0;
}
.tools::before {
  content: "";
  width: 32px;
  height: 3px;
  margin: 3px 0 -3px;
  border: 1px solid #a0a0a0;
  border-width: 0 1px 1px 0;
  background: #fff;
}
.tools button, .tools svg { width: 24px; height: 24px; }

/* Prompt and status */
.prompt { height: 28px; padding-left: 2px; }
.prompt p {
  display: inline-flex;
  align-items: center;
  height: 27px;
  margin: 0;
  padding: 0 9px 0 11px;
  border: 1px solid #a0a0a0;
  border-width: 0 1px;
  font: bold 12px/16px "Liberation Sans", sans-serif;
}

.status {
  display: flex;
  align-items: center;
  height: 22px;
  background: #fff;
  border-top: 1px solid #a0a0a0;
  border-bottom: 1px solid #808080;
  color: #555;
}
.hint { margin-left: 1px; margin-right: auto; }
.cell { display: flex; align-items: center; gap: 8px; height: 16px; padding-left: 3px; border-left: 1px solid #c8c8c8; white-space: nowrap; }
.cell b { font-weight: 400; color: #000; }
.type { width: 350px; border-left: 0; padding-left: 1px; }
.type svg { margin-right: -4px; }
.scale { width: 121px; }
.length { width: 115px; }
.angle { width: 92px; }
.unit { width: 50px; }
.percent { width: 81px; }
```
